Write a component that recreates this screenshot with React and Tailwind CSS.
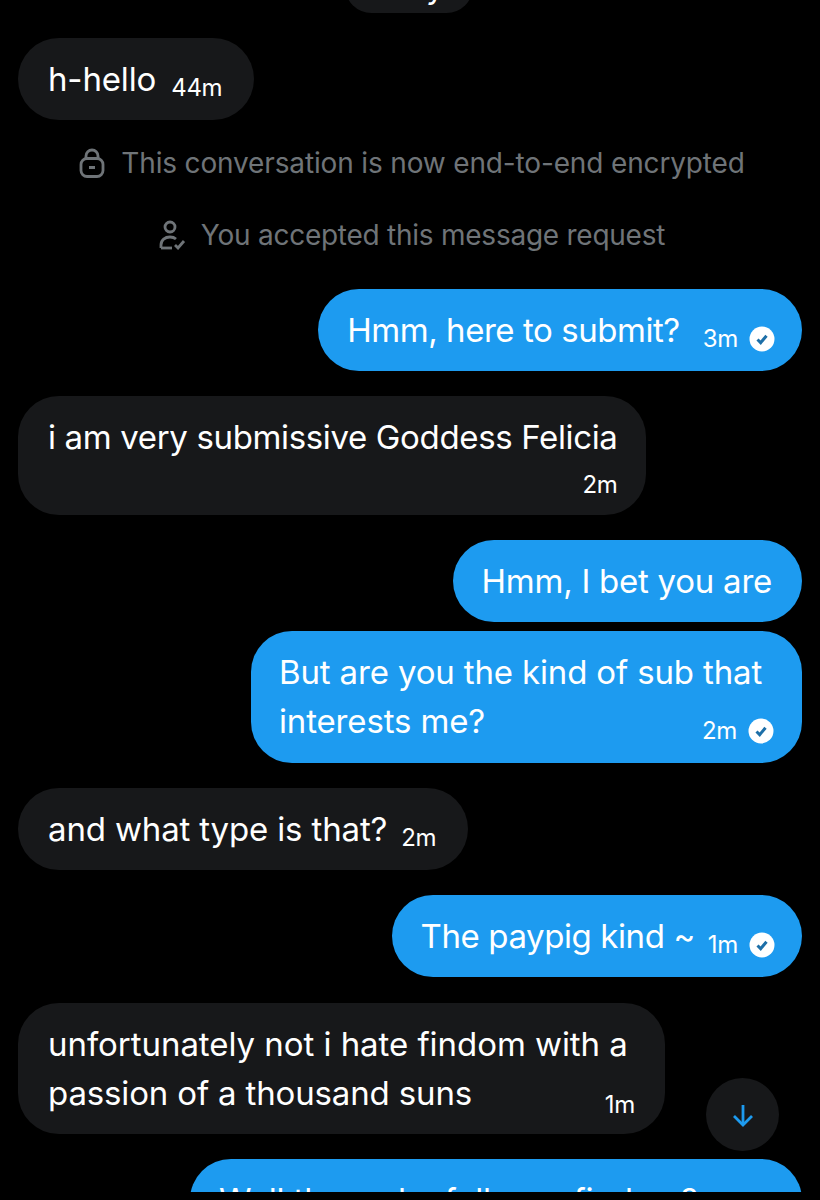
import React from "react";

const FONT = "font-['Inter','Liberation_Sans',sans-serif]";

function Check() {
  return (
    <svg width="26" height="26" viewBox="0 0 26 26" className="shrink-0">
      <circle cx="13" cy="13" r="12.5" fill="#fff" />
      <path d="M8.5 13.5l3.2 3.2 5.8-7" fill="none" stroke="#1d6fa8" strokeWidth="3" />
    </svg>
  );
}

function Time({ t, read }) {
  return (
    <span className="flex items-center gap-[11px] text-[24px] leading-[26px] whitespace-nowrap tracking-[-0.3px]">
      {t}
      {read && <Check />}
    </span>
  );
}

function Sent({ children, t, read, className = "", textClass = "tracking-[-0.15px]", gap = "ml-[12px]", pad = "pl-[29px]" }) {
  return (
    <div className={`self-end bg-[#1d9bf0] text-white rounded-[41px] ${pad} pr-[30px] py-[17px] flex items-end whitespace-nowrap ${className}`}>
      <span className={`text-[33px] leading-[48px] ${textClass}`}>{children}</span>
      {t && (
        <span className={`${gap} pb-[2px] mr-[-3px]`}>
          <Time t={t} read={read} />
        </span>
      )}
    </div>
  );
}

function Received({ children, t, className = "", gap = "ml-[15px]" }) {
  return (
    <div className={`self-start bg-[#17181a] text-white rounded-[41px] pl-[30px] pr-[32px] py-[17px] flex items-end ${className}`}>
      <span className="text-[33px] leading-[48px] tracking-[-0.15px]">{children}</span>
      <span className={`${gap} pb-[2px]`}>
        <Time t={t} />
      </span>
    </div>
  );
}

function Notice({ icon, children, className = "" }) {
  return (
    <div className={`flex items-center justify-center pl-[4px] text-[#6f7478] text-[28px] leading-[36px] ${className}`}>
      {icon}
      {children}
    </div>
  );
}

export default function App() {
  return (
    <div className={`relative h-[1200px] bg-black overflow-hidden ${FONT}`}>
      <div className="h-[1192px] overflow-hidden flex flex-col px-[18px]">
        <div className="self-center -mt-[40px] ml-[-3px] w-[128px] h-[53px] bg-[#17181a] rounded-[30px] shrink-0 flex items-end justify-end pr-[28px] pb-[3px] text-white text-[33px] leading-[48px]">
          y
        </div>

        <Received t="44m" className="mt-[25px] shrink-0">h-hello</Received>

        <Notice
          className="mt-[25px] shrink-0 tracking-[-0.15px]"
          icon={
            <svg width="26" height="30" viewBox="0 0 26 30" fill="none" stroke="#6f7478" strokeWidth="2.8" className="mr-[16px]">
              <rect x="2" y="10.5" width="22" height="18" rx="6" />
              <path d="M7 11V8a6 6 0 0 1 12 0v3" />
              <path d="M10 19.5h6" strokeWidth="3" />
            </svg>
          }
        >
          This conversation is now end-to-end encrypted
        </Notice>

        <Notice
          className="mt-[36px] shrink-0 tracking-[-0.25px]"
          icon={
            <svg width="28" height="30" viewBox="0 0 28 30" fill="none" stroke="#6f7478" strokeWidth="2.8" className="mr-[14px]">
              <circle cx="11" cy="7" r="5" />
              <path d="M2 28v-3c0-5 4-8 9-8 2.5 0 4.5.7 6 2" />
              <path d="M2 28h11" />
              <path d="M16 25l3 3 6-7" />
            </svg>
          }
        >
          You accepted this message request
        </Notice>

        <Sent t="3m" read gap="ml-[23px]" textClass="tracking-[-0.45px]" className="mt-[36px] shrink-0">
          Hmm, here to submit?
        </Sent>

        <div className="mt-[25px] self-start shrink-0 bg-[#17181a] text-white rounded-[41px] pl-[30px] pr-[28px] pt-[17px] pb-[17px]">
          <div className="text-[33px] leading-[48px] tracking-[-0.35px]">i am very submissive Goddess Felicia</div>
          <div className="flex justify-end mt-[11px]">
            <Time t="2m" />
          </div>
        </div>

        <Sent textClass="tracking-[-0.25px]" className="mt-[25px] shrink-0">Hmm, I bet you are</Sent>

        <div className="mt-[9px] self-end shrink-0 w-[551px] bg-[#1d9bf0] text-white rounded-[41px] pl-[28px] pr-[28px] pt-[17px] pb-[17px] relative">
          <div className="text-[33px] leading-[49px] tracking-[-0.15px]">But are you the kind of sub that</div>
          <div className="flex items-end justify-between">
            <span className="text-[33px] leading-[49px] tracking-[-0.15px]">interests me?</span>
            <span className="pb-[2px]">
              <Time t="2m" read />
            </span>
          </div>
        </div>

        <Received t="2m" gap="ml-[14px]" className="mt-[25px] shrink-0">and what type is that?</Received>

        <Sent t="1m" read textClass="tracking-[-0.4px]" gap="ml-[13px]" className="mt-[25px] shrink-0">
          The paypig kind ~
        </Sent>

        <div className="mt-[26px] self-start shrink-0 w-[647px] bg-[#17181a] text-white rounded-[41px] pl-[30px] pr-[30px] pt-[17px] pb-[16px]">
          <div className="text-[33px] leading-[49px] tracking-[-0.05px]">unfortunately not i hate findom with a</div>
          <div className="flex items-end justify-between">
            <span className="text-[33px] leading-[49px] tracking-[-0.15px]">passion of a thousand suns</span>
            <Time t="1m" />
          </div>
        </div>

        <Sent t="1m" read gap="ml-[10px]" className="mt-[25px] shrink-0">Well then why follow a findom?</Sent>
      </div>

      <div className="absolute left-[706px] top-[1078px] w-[73px] h-[73px] rounded-full bg-[#17181a] flex items-center justify-center">
        <svg width="24" height="24" viewBox="0 0 24 24" fill="none" stroke="#1d9bf0" strokeWidth="2.8">
          <path d="M12 2v20" />
          <path d="M3 13l9 9 9-9" />
        </svg>
      </div>
    </div>
  );
}
